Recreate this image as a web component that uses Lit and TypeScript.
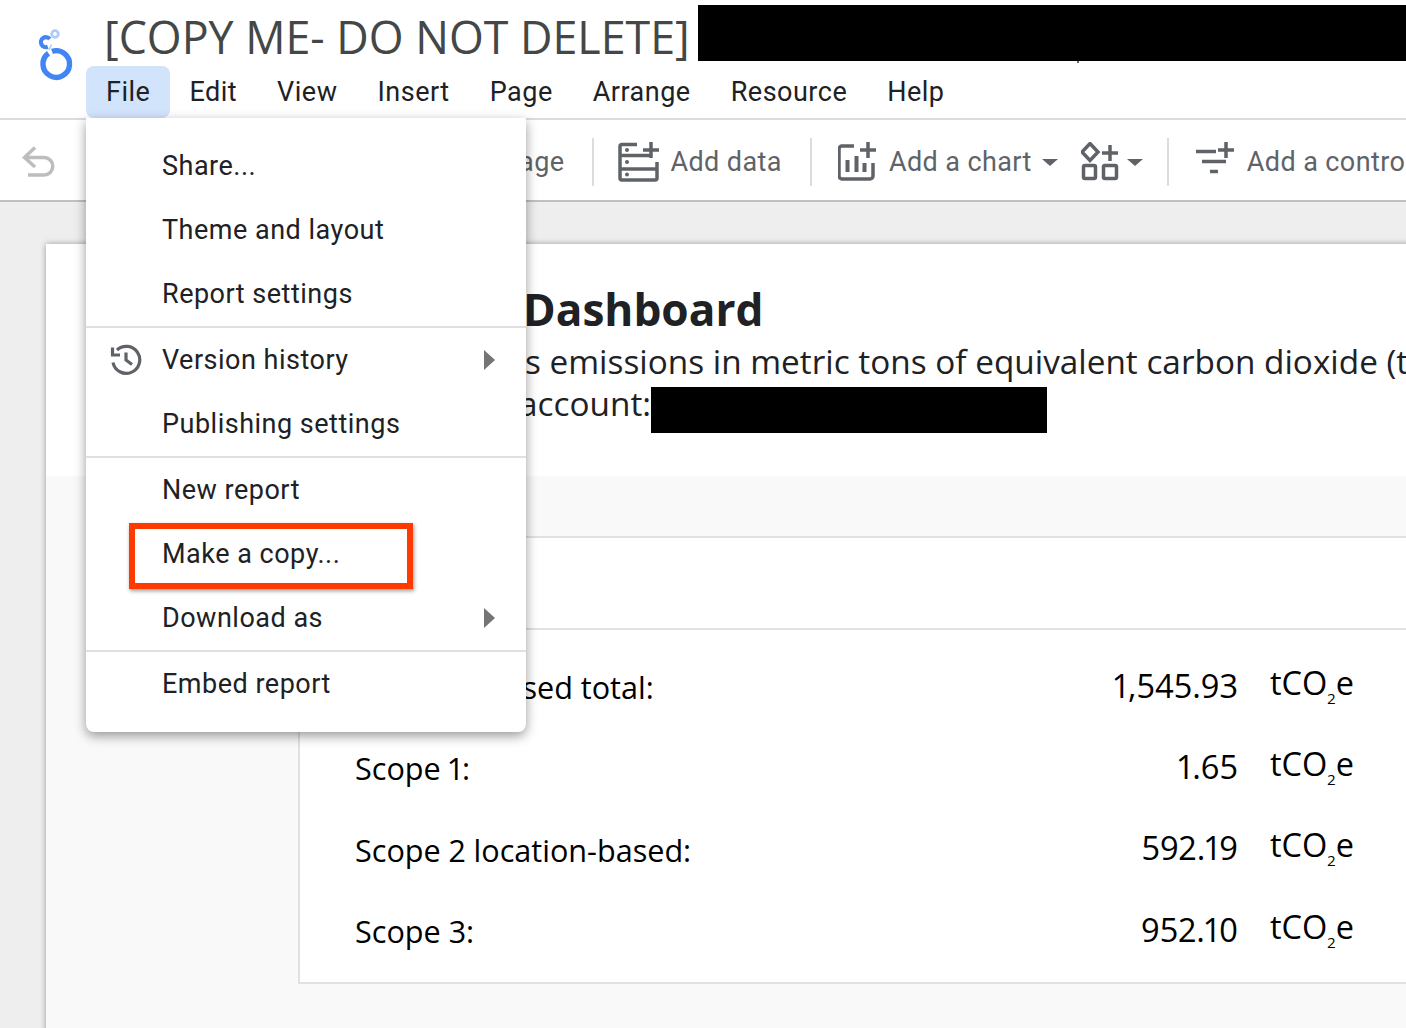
import { LitElement, html, css, svg } from 'lit';
import { customElement } from 'lit/decorators.js';

const NAV = ['File', 'Edit', 'View', 'Insert', 'Page', 'Arrange', 'Resource', 'Help'];

const MENU = [
  [{ label: 'Share...' }, { label: 'Theme and layout' }, { label: 'Report settings' }],
  [{ label: 'Version history', icon: true, sub: true }, { label: 'Publishing settings' }],
  [{ label: 'New report' }, { label: 'Make a copy...' }, { label: 'Download as', sub: true }],
  [{ label: 'Embed report' }],
];

const ROWS = [
  ['Location-based total:', '1,545.93'],
  ['Scope 1:', '1.65'],
  ['Scope 2 location-based:', '592.19'],
  ['Scope 3:', '952.10'],
];

// icons are drawn in page coordinates, the viewBox does the offset
const dataIcon = svg`
  <path d="M636 144.500H621a2 2 0 0 0-2 2V178a2 2 0 0 0 2 2H654a2 2 0 0 0 2-2V162" />
  <path d="M619 155.500H650M619 169H656" />
  <circle class="dot" cx="626" cy="150" r="2" /><circle class="dot" cx="626" cy="162" r="2" /><circle class="dot" cx="626" cy="174.500" r="2" />
  <path d="M642 150H658M650 142V158" />`;

const chartIcon = svg`
  <path d="M854 146H842a3 3 0 0 0-3 3V176a3 3 0 0 0 3 3H870a3 3 0 0 0 3-3V163" />
  <path class="bar" d="M847.500 160V172M856.500 156V172M864.500 163V172" />
  <path d="M860 150H876M868 142V158" />`;

const elementsIcon = svg`
  <path d="M1090 143.500L1098 152L1090 160.500L1082 152Z" />
  <path d="M1102 153H1118M1110 145V161" />
  <rect x="1083.500" y="165.500" width="12" height="13" rx="1.500" /><rect x="1103.500" y="165.500" width="13" height="13" rx="1.500" />`;

const controlIcon = svg`
  <path d="M1196 151.500H1216M1202 161.500H1226M1210 171.500H1218" />
  <path d="M1218 150H1234M1226 142V158" />`;

@customElement('app-root')
export class AppRoot extends LitElement {
  static styles = css`
    :host {
      display: block;
      width: 1406px;
      height: 1028px;
      position: relative;
      overflow: hidden;
      background: #eeeeee;
      font-family: Roboto, sans-serif;
      color: #202124;
    }
    .header {
      display: flex;
      height: 118px;
      background: #fff;
      border-bottom: 2px solid #dadce0;
    }
    .logo {
      width: 86px;
      flex: none;
    }
    .logo svg {
      display: block;
    }
    .head-main {
      flex: 1;
      min-width: 0;
    }
    .title-row {
      display: flex;
      align-items: flex-start;
      height: 66px;
      padding-left: 18px;
    }
    .title {
      font-family: 'Open Sans', sans-serif;
      font-size: 44.750px;
      line-height: 60px;
      margin-top: 7px;
      color: #444746;
      white-space: nowrap;
    }
    .title-redact {
      position: relative;
      margin: 5px 0 0 8px;
      flex: 1;
      height: 56px;
      background: #000;
    }
    .title-redact::after {
      content: '';
      position: absolute;
      left: 379px;
      top: 56px;
      width: 2px;
      height: 2px;
      background: #666;
    }
    .nav {
      display: flex;
      height: 52px;
    }
    .nav span {
      display: flex;
      align-items: center;
      padding: 0 20px;
      font-size: 27px;
      letter-spacing: 0.5px;
    }
    .nav span.open {
      margin-right: -1px;
      background: #d2e3fc;
      border-radius: 8px;
    }
    .toolbar {
      display: flex;
      align-items: center;
      height: 76px;
      padding: 4px 0 0 22px;
      background: #fff;
      border-bottom: 2px solid #bdc1c6;
      color: #5f6368;
      font-size: 27px;
      letter-spacing: 0.4px;
      white-space: nowrap;
    }
    .toolbar svg {
      display: block;
      flex: none;
      fill: none;
      stroke: #5f6368;
      stroke-width: 3.500;
    }
    .toolbar svg .dot {
      fill: #5f6368;
      stroke: none;
    }
    .toolbar svg .bar {
      stroke-width: 4;
    }
    .toolbar .undo {
      stroke: #bdbdbd;
    }
    .add-page {
      margin-left: 369px;
    }
    .sep {
      flex: none;
      width: 2px;
      height: 48px;
      background: #dadce0;
      margin: 0 24px 0 28px;
    }
    .sep.data {
      margin: 0 26px 0 28px;
    }
    .sep.wide {
      margin: 0 27px 0 24px;
    }
    .tool-label {
      margin-left: 13px;
    }
    .tool-label.tight {
      margin-left: 10px;
    }
    .caret {
      flex: none;
      width: 0;
      height: 0;
      border-left: 8px solid transparent;
      border-right: 8px solid transparent;
      border-top: 7px solid #5f6368;
    }
    .caret.chart {
      margin: 0 23px 0 10px;
    }
    .caret.elements {
      margin-left: 8px;
    }
    .canvas {
      padding: 42px 0 0 46px;
    }
    .page {
      width: 1500px;
      height: 800px;
      background: #f9f9f9;
      box-shadow: 0 0 6px rgba(0, 0, 0, 0.35);
    }
    .intro {
      height: 232px;
      padding-left: 479px;
      box-sizing: border-box;
      background: #fff;
    }
    .intro h1 {
      margin: 0 0 0 -2px;
      padding-top: 37px;
      font-family: 'Open Sans', sans-serif;
      font-size: 44.200px;
      line-height: 56px;
      font-weight: 700;
      color: #202124;
    }
    .intro p {
      margin: 3px 0 0;
      font-family: 'Open Sans', sans-serif;
      font-size: 33.350px;
      line-height: 42px;
      white-space: nowrap;
      color: #202124;
    }
    .account {
      display: flex;
      align-items: flex-start;
    }
    .account p {
      margin: 0 0 0 -6px;
    }
    .account-redact {
      width: 396px;
      height: 46px;
      margin: 5px 0 0 0;
      background: #000;
    }
    .panel {
      width: 1200px;
      margin-left: 252px;
      background: #fff;
      border-left: 2px solid #dfe1e5;
      border-bottom: 2px solid #dfe1e5;
      box-sizing: border-box;
      height: 508px;
    }
    .band {
      height: 60px;
      background: #f9f9f9;
      border-bottom: 2px solid #dfe1e5;
    }
    .spacer {
      height: 90px;
      border-bottom: 2px solid #dfe1e5;
    }
    .rows {
      padding-top: 16.500px;
      font-family: 'Open Sans', sans-serif;
      font-variant-numeric: proportional-nums;
      color: #000;
    }
    .row {
      display: grid;
      grid-template-columns: 700px 183px 32px auto;
      height: 81.300px;
      padding-left: 55px;
      align-items: center;
      font-size: 30.600px;
      white-space: nowrap;
    }
    .row .value {
      font-size: 32.700px;
      text-align: right;
      transform: translateY(-2.500px);
    }
    .row .unit {
      grid-column: 4;
      font-size: 32.500px;
      transform: translateY(-5.500px);
    }
    .row sub {
      font-size: 15px;
      line-height: 0;
      vertical-align: -9px;
    }
    .menu {
      position: absolute;
      left: 86px;
      top: 118px;
      width: 440px;
      padding: 16px 0;
      background: #fff;
      border-radius: 0 0 8px 8px;
      box-shadow: 0 4px 12px rgba(0, 0, 0, 0.4);
      font-size: 27px;
      letter-spacing: 0.5px;
    }
    .group + .group {
      border-top: 2px solid #e0e0e0;
    }
    .item {
      display: flex;
      align-items: center;
      height: 64px;
      padding-left: 76px;
      padding-right: 31px;
      position: relative;
    }
    .item .label {
      flex: 1;
    }
    .item .hist {
      position: absolute;
      left: 24px;
      top: 16px;
      fill: none;
      stroke: #5f6368;
      stroke-width: 3.200;
    }
    .item .arrow {
      width: 0;
      height: 0;
      border-top: 10px solid transparent;
      border-bottom: 10px solid transparent;
      border-left: 11px solid #757575;
    }
    .highlight {
      position: absolute;
      left: 129px;
      top: 523px;
      width: 284px;
      height: 66px;
      box-sizing: border-box;
      border: 6px solid #ff3a00;
      box-shadow: 1px 2px 4px rgba(0, 0, 0, 0.4);
    }
  `;

  renderRow([label, value]: string[]) {
    return html`
      <div class="row">
        <span>${label}</span>
        <span class="value">${value}</span>
        <span class="unit">tCO<sub>2</sub>e</span>
      </div>
    `;
  }

  render() {
    return html`
      <div class="header">
        <div class="logo">
          <svg width="86" height="118" viewBox="1 0 86 118" fill="none">
            <path d="M49.500 53.200A13.300 13.300 0 1 0 53 51.400" stroke="#4285f4" stroke-width="5.400" />
            <path d="M50.800 39A5 5 0 1 0 48.800 46.800" stroke="#4285f4" stroke-width="4.200" />
            <circle cx="56" cy="34" r="3.300" stroke="#aecbfa" stroke-width="2.800" />
            <path d="M52.500 44.500L50 50" stroke="#aecbfa" stroke-width="1.500" />
          </svg>
        </div>
        <div class="head-main">
          <div class="title-row">
            <span class="title">[COPY ME- DO NOT DELETE]</span>
            <div class="title-redact"></div>
          </div>
          <div class="nav">
            ${NAV.map((n, i) => html`<span class=${i === 0 ? 'open' : ''}>${n}</span>`)}
          </div>
        </div>
      </div>

      <div class="toolbar">
        <svg class="undo" width="34" height="34" viewBox="22 145 34 34">
          <path d="M35 147.500L24.500 157.500L35 167M25 157.500H44a8.750 8.750 0 0 1 0 17.500H28" />
        </svg>
        <span class="add-page">Add a page</span>
        <div class="sep"></div>
        <svg width="42" height="42" viewBox="617 141 42 42">${dataIcon}</svg>
        <span class="tool-label tight">Add data</span>
        <div class="sep data"></div>
        <svg width="38" height="40" viewBox="838 142 38 40">${chartIcon}</svg>
        <span class="tool-label">Add a chart</span>
        <div class="caret chart"></div>
        <svg width="38" height="40" viewBox="1081 142 38 40">${elementsIcon}</svg>
        <div class="caret elements"></div>
        <div class="sep wide"></div>
        <svg width="38" height="42" viewBox="1196 141 38 42">${controlIcon}</svg>
        <span class="tool-label">Add a control</span>
      </div>

      <div class="canvas">
        <div class="page">
          <div class="intro">
            <h1>Dashboard</h1>
            <p>s emissions in metric tons of equivalent carbon dioxide (tCO2e)</p>
            <div class="account">
              <p>account:</p>
              <div class="account-redact"></div>
            </div>
          </div>
          <div class="panel">
            <div class="band"></div>
            <div class="spacer"></div>
            <div class="rows">${ROWS.map((r) => this.renderRow(r))}</div>
          </div>
        </div>
      </div>

      <div class="menu">
        ${MENU.map(
          (group) => html`
            <div class="group">
              ${group.map(
                (it: any) => html`
                  <div class="item">
                    ${it.icon
                      ? html`<svg class="hist" width="32" height="32" viewBox="0 0 32 32">
                          <path d="M3 18.500A13.500 13.500 0 1 0 7 6" />
                          <path d="M2.500 3.500V11H10" />
                          <path d="M16 8.500V16L22 20.500" />
                        </svg>`
                      : ''}
                    <span class="label">${it.label}</span>
                    ${it.sub ? html`<span class="arrow"></span>` : ''}
                  </div>
                `
              )}
            </div>
          `
        )}
      </div>
      <div class="highlight"></div>
    `;
  }
}
